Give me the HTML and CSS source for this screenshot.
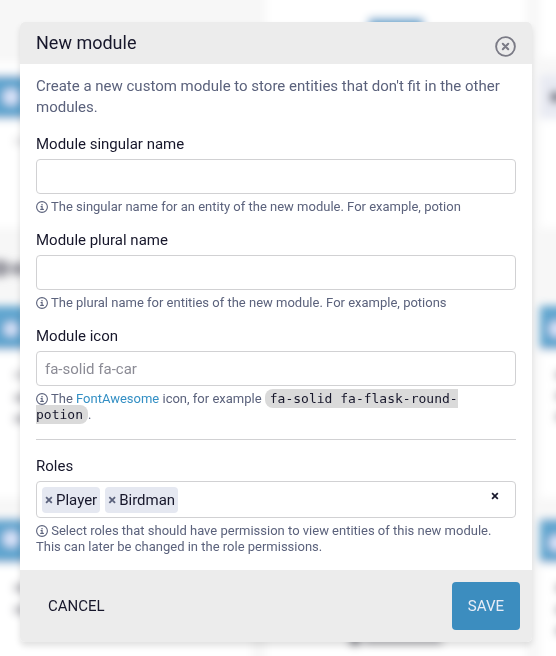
FILE: index.html
```html
<!DOCTYPE html>
<html lang="en">
<head>
<meta charset="utf-8">
<meta name="viewport" content="width=device-width, initial-scale=1">
<title>New module</title>
<link rel="stylesheet" href="styles.css">
</head>
<body>
<svg class="backdrop" viewBox="0 0 556 656" preserveAspectRatio="xMidYMin slice" aria-hidden="true">
  <defs>
    <filter id="soft" x="-20%" y="-20%" width="140%" height="140%"><feGaussianBlur stdDeviation="4"/></filter>
  </defs>
  <rect width="556" height="656" fill="#f7f7f7"/>
  <g filter="url(#soft)">
    <g fill="#fff">
      <rect x="-30" y="62" width="282" height="166"/>
      <rect x="-30" y="306" width="282" height="192"/>
      <rect x="-30" y="518" width="282" height="180"/>
      <rect x="266" y="-30" width="260" height="730"/>
      <rect x="540" y="-30" width="60" height="88"/>
      <rect x="540" y="75" width="60" height="153"/>
      <rect x="540" y="306" width="60" height="192"/>
      <rect x="540" y="518" width="60" height="180"/>
    </g>
    <g fill="#60a5cf">
      <rect x="-30" y="75" width="58" height="44"/>
      <rect x="-30" y="306" width="58" height="44"/>
      <rect x="-30" y="519" width="58" height="44"/>
      <rect x="368" y="18" width="56" height="20" rx="4"/>
      <rect x="540" y="306" width="53" height="44"/>
      <rect x="540" y="519" width="53" height="44"/>
    </g>
    <rect x="540" y="75" width="53" height="44" fill="#e8eaf3"/>
    <g fill="#dce4fa">
      <circle cx="11" cy="97" r="8"/>
      <circle cx="11" cy="329" r="7"/>
      <circle cx="11" cy="539" r="8"/>
      <circle cx="557" cy="329" r="8"/>
      <circle cx="557" cy="543" r="8"/>
    </g>
    <circle cx="556" cy="97" r="6" fill="#555768"/>
    <g fill="#9a9aa2">
      <path d="M-8 260h8q10 0 10 8.500t-10 8.500h-8M12 263h14v12h-14z"/>
      <rect x="14" y="371" width="14" height="8" opacity=".5"/>
      <rect x="14" y="394" width="14" height="8" opacity=".8"/>
      <rect x="14" y="415" width="14" height="8" opacity=".8"/>
      <rect x="14" y="584" width="14" height="8" opacity=".8"/>
      <rect x="14" y="606" width="14" height="8" opacity=".8"/>
      <rect x="14" y="138" width="14" height="7" opacity=".3"/>
      <rect x="556" y="371" width="14" height="8"/>
      <rect x="556" y="392" width="14" height="8"/>
      <rect x="556" y="413" width="14" height="8"/>
      <rect x="556" y="584" width="14" height="8"/>
      <rect x="556" y="606" width="14" height="8"/>
      <rect x="556" y="627" width="14" height="8"/>
      <rect x="364" y="637" width="78" height="7"/>
      <circle cx="355" cy="640" r="6" fill="#555768"/>
    </g>
  </g>
</svg>
<main class="modal" role="dialog" aria-labelledby="title">
  <header class="modal-header">
    <h1 id="title">New module</h1>
    <button class="close" type="button" aria-label="Close">
      <svg viewBox="0 0 512 512" aria-hidden="true"><g fill="none" stroke="currentColor"><circle cx="256" cy="256" r="229" stroke-width="46"/><path d="M190 190 322 322M322 190 190 322" stroke-width="50" stroke-linecap="round"/></g></svg>
    </button>
  </header>
  <form id="module-form" class="modal-body">
    <p class="intro">Create a new custom module to store entities that don't fit in the other modules.</p>
    <div class="field">
      <label for="singular">Module singular name</label>
      <input id="singular" type="text">
      <p class="help"><svg class="info" viewBox="0 0 12 12" aria-hidden="true"><use href="#info"/></svg> The singular name for an entity of the new module. For example, potion</p>
    </div>
    <div class="field">
      <label for="plural">Module plural name</label>
      <input id="plural" type="text">
      <p class="help"><svg class="info" viewBox="0 0 12 12" aria-hidden="true"><use href="#info"/></svg> The plural name for entities of the new module. For example, potions</p>
    </div>
    <div class="field">
      <label for="icon">Module icon</label>
      <input id="icon" type="text" placeholder="fa-solid fa-car">
      <p class="help"><svg class="info" viewBox="0 0 12 12" aria-hidden="true"><use href="#info"/></svg> The <a href="#">FontAwesome</a> icon, for example <code>fa-solid fa-flask-round-<br>potion</code>.</p>
    </div>
    <hr>
    <div class="field">
      <label for="roles">Roles</label>
      <div class="select">
        <span class="tag"><button type="button" aria-label="Remove Player">×</button>Player</span>
        <span class="tag"><button type="button" aria-label="Remove Birdman">×</button>Birdman</span>
        <input id="roles" class="search" type="text">
        <button class="clear" type="button" aria-label="Remove all roles">×</button>
      </div>
      <p class="help"><svg class="info" viewBox="0 0 12 12" aria-hidden="true"><use href="#info"/></svg> Select roles that should have permission to view entities of this new module. This can later be changed in the role permissions.</p>
    </div>
  </form>
  <footer class="modal-footer">
    <button class="btn" type="button">CANCEL</button>
    <button class="btn primary" type="submit" form="module-form">SAVE</button>
  </footer>
</main>
<svg class="symbols" aria-hidden="true">
  <symbol id="info" viewBox="0 0 12 12"><circle cx="6" cy="6" r="5.4" fill="none" stroke="currentColor" stroke-width="1.1"/><circle cx="6" cy="3.7" r=".8" fill="currentColor"/><path d="M5 5.6h1.1v2.7M4.7 8.4h2.7" fill="none" stroke="currentColor" stroke-width="1.1" stroke-linecap="round"/></symbol>
</svg>
</body>
</html>
```
FILE: styles.css
```css
* { box-sizing: border-box; }
body {
  margin: 0;
  padding: 22px 24px 14px 20px;
  font: 15px/21px Roboto, sans-serif;
  color: #17172b;
}
button, input { font: inherit; color: inherit; }
button { padding: 0; border: 0; background: none; cursor: pointer; }
h1, p { margin: 0; }
.backdrop { position: fixed; inset: 0; width: 100%; height: 100%; z-index: -1; }
.symbols { position: absolute; width: 0; height: 0; }
.modal {
  max-width: 672px;
  margin: 0 auto;
  overflow: hidden;
  border-radius: 5px;
  background: #fff;
  box-shadow: 0 4px 6px rgba(0, 0, 0, .12);
}
.modal-header {
  display: flex;
  justify-content: space-between;
  padding: 7px 16px;
  background: #ececec;
}
h1 { font-size: 18px; line-height: 28px; font-weight: 400; }
.close { width: 21px; height: 21px; margin-top: 7px; color: #7b7b86; }
.close svg { display: block; width: 100%; }
.modal-body { padding: 12px 16px 15px; }
.intro { color: #5b627c; margin-bottom: 16px; }
.field { margin-bottom: 15px; }
.field:last-child { margin-bottom: 0; }
.field label { display: block; margin-bottom: 4px; }
.field > input {
  display: block;
  width: 100%;
  height: 35px;
  padding: 0 8px;
  border: 1px solid #d1d1d3;
  border-radius: 4px;
  background: #fff;
}
input::placeholder { color: #8b8b95; opacity: 1; }
.help { margin-top: 5px; font-size: 13px; line-height: 16px; color: #5b627c; }
.info { width: 12px; height: 12px; vertical-align: -2px; }
.help a { color: #338fc4; text-decoration: none; }
code {
  padding: 2px 5px;
  border-radius: 8px;
  background: #dadada;
  color: #17172b;
  font: 13px/16px "DejaVu Sans Mono", monospace;
}
hr { margin: 16px 0; border: 0; border-top: 1px solid #d1d1d3; }
.select {
  display: flex;
  gap: 5px;
  height: 37px;
  padding: 5px;
  border: 1px solid #d1d1d3;
  border-radius: 4px;
}
.tag {
  display: flex;
  align-items: center;
  gap: 3px;
  height: 26px;
  padding: 0 3px;
  border-radius: 4px;
  background: #e5e8f1;
}
.tag button { font-weight: 700; color: #5b627c; }
.search { flex: 1; min-width: 0; border: 0; outline: 0; background: none; }
.clear { height: 18px; margin-right: 11px; font-weight: 700; line-height: 18px; }
.modal-footer {
  display: flex;
  justify-content: space-between;
  padding: 12px;
  background: #ececec;
}
.btn { height: 48px; padding: 0 16px; border-radius: 4px; }
.primary { background: #3c8dbf; color: #e8edf7; }
```
